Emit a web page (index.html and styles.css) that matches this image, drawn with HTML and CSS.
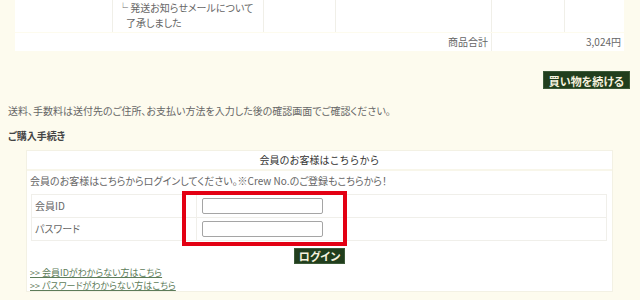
FILE: index.html
```html
<!DOCTYPE html>
<html lang="ja">
<head>
<meta charset="utf-8">
<title>カート</title>
<link rel="stylesheet" href="styles.css">
</head>
<body>
<div class="page">
  <div class="cart">
    <div class="cart-row items">
      <div class="cell"></div>
      <div class="cell option">
        <span class="opt-line">└ 発送お知らせメールについて</span>
        <span class="opt-line indent">了承しました</span>
      </div>
      <div class="cell"></div>
      <div class="cell"></div>
      <div class="cell"></div>
      <div class="cell"></div>
    </div>
    <div class="cart-row total">
      <div class="cell label">商品合計</div>
      <div class="cell amount">3,024円</div>
    </div>
  </div>

  <div class="continue-wrap">
    <a class="btn" href="#">買い物を続ける</a>
  </div>

  <p class="note">送料、手数料は送付先のご住所、お支払い方法を入力した後の確認画面でご確認ください。</p>
  <h2 class="heading">ご購入手続き</h2>

  <div class="login-box">
    <div class="login-head">会員のお客様はこちらから</div>
    <div class="login-msg">会員のお客様はこちらからログインしてください。※Crew No.のご登録もこちらから！</div>
    <div class="form-table">
      <div class="form-row">
        <div class="form-label">会員ID</div>
        <div class="form-field"><input class="text-input" type="text"></div>
      </div>
      <div class="form-row">
        <div class="form-label">パスワード</div>
        <div class="form-field"><input class="text-input" type="password"></div>
      </div>
    </div>
    <div class="login-action"><a class="btn btn-small" href="#">ログイン</a></div>
    <div class="links">
      <a class="help-link" href="#">&gt;&gt; 会員IDがわからない方はこちら</a>
      <a class="help-link" href="#">&gt;&gt; パスワードがわからない方はこちら</a>
    </div>
    <div class="highlight"></div>
  </div>
</div>
</body>
</html>
```

FILE: styles.css
```css
html, body {
  margin: 0;
  padding: 0;
  background: #fdfbee;
}
body {
  font-family: "Noto Sans CJK JP", "Noto Sans", sans-serif;
  font-size: 10px;
  color: #666;
  font-feature-settings: "palt";
  width: 640px;
  height: 300px;
  overflow: hidden;
}
.page {
  position: relative;
}
.cart {
  margin-left: 15px;
  width: 609px;
  display: flex;
  flex-direction: column;
  gap: 1px;
}
.cart-row {
  display: grid;
  background: #fff;
}
.cart-row.items {
  grid-template-columns: 97px 151px 72px 156px 73px 60px;
  height: 32px;
}
.cart-row.total {
  grid-template-columns: 476px 133px;
  height: 18px;
}
.cell {
  border-left: 1px solid #f0efe8;
  box-sizing: border-box;
}
.cell:first-child {
  border-left: none;
}
.option {
  display: flex;
  flex-direction: column;
  padding: 0 0 0 5px;
  line-height: 15px;
}
.opt-line.indent {
  padding-left: 8px;
}
.label, .amount {
  text-align: right;
  line-height: 18px;
  padding-right: 3px;
}
.continue-wrap {
  display: flex;
  justify-content: flex-end;
  margin-top: 20px;
  padding-right: 10px;
}
.btn {
  display: inline-block;
  background: #213e1d;
  color: #f6f2df;
  font-weight: bold;
  font-size: 11px;
  text-decoration: none;
  height: 18px;
  line-height: 18px;
  padding: 0 5px;
  box-sizing: border-box;
  border: 1px solid #3c5a38;
}
.note {
  margin: 14px 0 0 8px;
  line-height: 16px;
}
.heading {
  margin: 9px 0 0 8px;
  font-size: 10px;
  font-weight: bold;
  line-height: 16px;
  color: #444;
}
.login-box {
  position: relative;
  margin: 6px 0 0 26px;
  width: 587px;
  height: 142px;
  background: #fff;
  border: 1px solid #f3f1e4;
  box-sizing: border-box;
}
.login-head {
  height: 18px;
  line-height: 18px;
  text-align: center;
  color: #333;
  font-feature-settings: normal;
  border-bottom: 2px solid #f8f6ea;
}
.login-msg {
  line-height: 20px;
  padding-left: 3px;
}
.form-table {
  margin: 3px 5px 0 4px;
  border: 1px solid #f0efea;
  display: flex;
  flex-direction: column;
}
.form-row {
  display: grid;
  grid-template-columns: 165px 1fr;
  height: 22px;
  align-items: center;
}
.form-row + .form-row {
  border-top: 1px solid #f0efea;
}
.form-label {
  padding-left: 3px;
  height: 100%;
  line-height: 22px;
  border-right: 1px solid #f0efea;
}
.form-field {
  padding-left: 5px;
  display: flex;
  align-items: center;
}
.text-input {
  width: 121px;
  height: 16px;
  box-sizing: border-box;
  border: 1px solid #a5a5a5;
  border-radius: 2px;
  margin: 0;
  padding: 0;
  background: #fff;
}
.login-action {
  display: flex;
  justify-content: center;
  margin-top: 7px;
}
.btn-small {
  height: 16px;
  line-height: 15px;
  padding: 0 4px;
  font-size: 11px;
}
.links {
  margin-top: 2px;
  padding-left: 3px;
  display: flex;
  flex-direction: column;
}
.help-link {
  font-size: 9px;
  line-height: 13px;
  color: #5d7c59;
  text-decoration: underline;
  align-self: flex-start;
}
.highlight {
  position: absolute;
  left: 155px;
  top: 40px;
  width: 165px;
  height: 55px;
  border: 4px solid #e30013;
  box-sizing: border-box;
}
```
